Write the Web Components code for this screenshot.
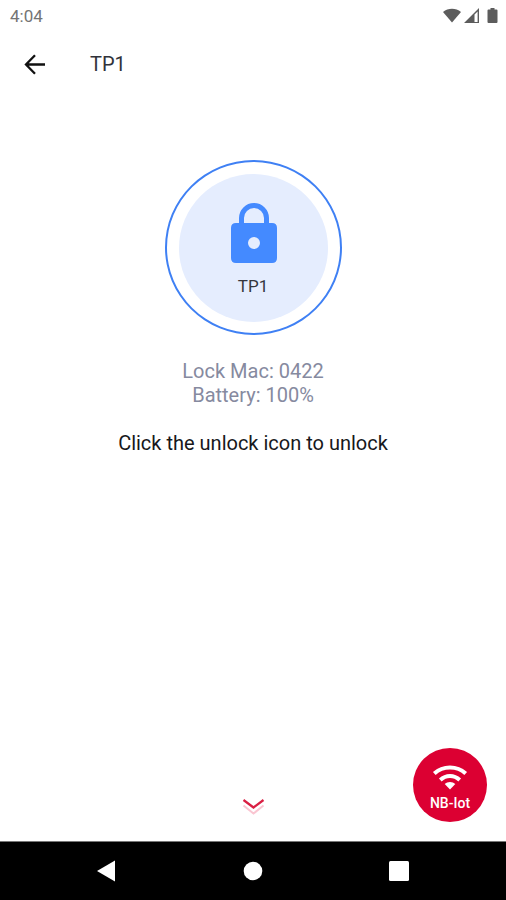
<!DOCTYPE html>
<html lang="en">
<head>
<meta charset="utf-8">
<meta name="viewport" content="width=device-width, initial-scale=1">
<title>TP1</title>
<style>
html, body { height: 100%; }
body { margin: 0; background: #fff; font-family: Roboto, "Liberation Sans", sans-serif; color: #1f2024; }
</style>
</head>
<body>
<lock-app></lock-app>
<script>
const define = (name, markup) => {
  const template = document.createElement('template');
  template.innerHTML = markup;
  customElements.define(name, class extends HTMLElement {
    constructor() {
      super();
      this.attachShadow({ mode: 'open' }).append(template.content.cloneNode(true));
    }
  });
};

const reset = `*{box-sizing:border-box} button{display:flex;align-items:center;justify-content:center;margin:0;padding:0;border:0;background:none;font:inherit;color:inherit;cursor:pointer} svg{display:block}`;

define('status-bar', `
<style>${reset}
:host{display:flex;align-items:center;justify-content:space-between;height:32px;padding:0 8px 0 10px;font-size:17px;line-height:20px;color:#747474}
.icons{display:flex;align-items:center;gap:3px;color:#5c5c5c}
</style>
<span>4:04</span>
<div class="icons">
  <svg width="18" height="16" viewBox="0 0 18 16" fill="currentColor"><path d="M9 14.400 0 4C5.200 -.2 12.800 -.2 18 4Z"/></svg>
  <svg width="16" height="16" viewBox="0 0 16 16" fill="currentColor"><path fill-rule="evenodd" d="M0 15 15 0V15ZM10.500 6.500V14H13.600V3.400Z"/></svg>
  <svg width="15" height="16" viewBox="0 0 15 16" fill="currentColor"><path d="M7.500 0h4v1.500h2q1 0 1 1V14q0 1-1 1H5.500q-1 0-1-1V2.500q0-1 1-1h2Z"/></svg>
</div>`);

define('app-bar', `
<style>${reset}
:host{display:flex;align-items:center;gap:30px;height:64px;padding:0 10px}
button{width:50px;height:50px}
h1{margin:0;font-size:20px;line-height:24px;font-weight:400;color:#30323a}
</style>
<button type="button" aria-label="Back">
  <svg width="24" height="24" viewBox="0 0 24 24" fill="none" stroke="#111" stroke-width="2.300"><path d="M22 12.500H3.500M12 3.300 3 12.500l9 9.200"/></svg>
</button>
<h1><slot></slot></h1>`);

define('unlock-button', `
<style>${reset}
:host{display:block}
button{width:177px;height:175px;border:2px solid #3f80f4;border-radius:50%}
.disc{display:flex;flex-direction:column;align-items:center;gap:12px;width:149px;height:148px;padding-top:29px;border-radius:50%;background:#e5edfe;color:#34363d;font-size:17px;line-height:20px}
</style>
<button type="button">
  <span class="disc">
    <svg width="48" height="61" viewBox="-1 0 48 61"><path d="M11.500 22V15a12.500 12.500 0 0 1 25 0v7" fill="none" stroke="#448aff" stroke-width="5"/><path fill="#448aff" fill-rule="evenodd" d="M6 20H42Q47 20 47 25V55Q47 60 42 60H6Q1 60 1 55V25Q1 20 6 20ZM24 34a6 6 0 1 0 0 12a6 6 0 1 0 0-12Z"/></svg>
    <slot></slot>
  </span>
</button>`);

define('lock-info', `
<style>${reset}
:host{display:block;text-align:center;font-size:20px;line-height:24px}
p{margin:0;color:#868a9f}
.hint{margin-top:24px;color:#17181b}
</style>
<p><slot name="mac"></slot></p><p><slot name="battery"></slot></p><p class="hint"><slot></slot></p>`);

define('page-footer', `
<style>${reset}
:host{display:grid;grid-template-columns:1fr auto 1fr;align-items:end;padding:0 19px 19px}
.more{grid-column:2;width:24px;height:30px}
.fab{grid-column:3;justify-self:end;flex-direction:column;gap:4px;width:74px;height:74px;border-radius:50%;background:#dc0032;color:#fff;font-size:14px;line-height:18px;font-weight:500;padding-top:6px}
</style>
<button class="more" type="button" aria-label="Show more">
  <svg width="24" height="20" viewBox="0 0 24 20" fill="none"><path d="m2.500 8.500 10 8 10-8" stroke="#fac5d1" stroke-width="2"/><path d="m2.500 3 10 7.500 10-7.500" stroke="#d91f43" stroke-width="2.200"/></svg>
</button>
<button class="fab" type="button">
  <svg width="36" height="26" viewBox="0 0 36 26" fill="none" stroke="#fff" stroke-width="4"><path d="M2.300 9.500C11 1.500 25 1.500 33.700 9.500M8.300 16C14 10.700 22 10.700 27.700 16"/><path d="M18 25.500 12.700 20C15.500 17.300 20.500 17.300 23.300 20Z" fill="#fff" stroke="none"/></svg>
  <slot></slot>
</button>`);

define('system-nav', `
<style>${reset}
:host{display:flex;height:59px;padding:0 34px;background:#000;border-top:1px solid #777;color:#fff}
button{flex:1}
</style>
<button type="button" aria-label="Back"><svg width="20" height="22" viewBox="0 0 20 22" fill="currentColor"><path d="M0 11 18 .5V21.500Z"/></svg></button>
<button type="button" aria-label="Home"><svg width="20" height="20" viewBox="0 0 20 20" fill="currentColor"><circle cx="10" cy="10" r="9.300"/></svg></button>
<button type="button" aria-label="Recent apps"><svg width="20" height="20" viewBox="0 0 20 20" fill="currentColor"><rect width="20" height="20" rx="1.500"/></svg></button>`);

define('lock-app', `
<style>${reset}
:host{display:flex;flex-direction:column;min-height:100%}
main{flex:1;display:flex;flex-direction:column;align-items:center;gap:24px;padding-top:64px}
</style>
<status-bar></status-bar>
<app-bar>TP1</app-bar>
<main>
  <unlock-button>TP1</unlock-button>
  <lock-info><span slot="mac">Lock Mac: 0422</span><span slot="battery">Battery: 100%</span>Click the unlock icon to unlock</lock-info>
</main>
<page-footer>NB-Iot</page-footer>
<system-nav></system-nav>`);
</script>
</body>
</html>
